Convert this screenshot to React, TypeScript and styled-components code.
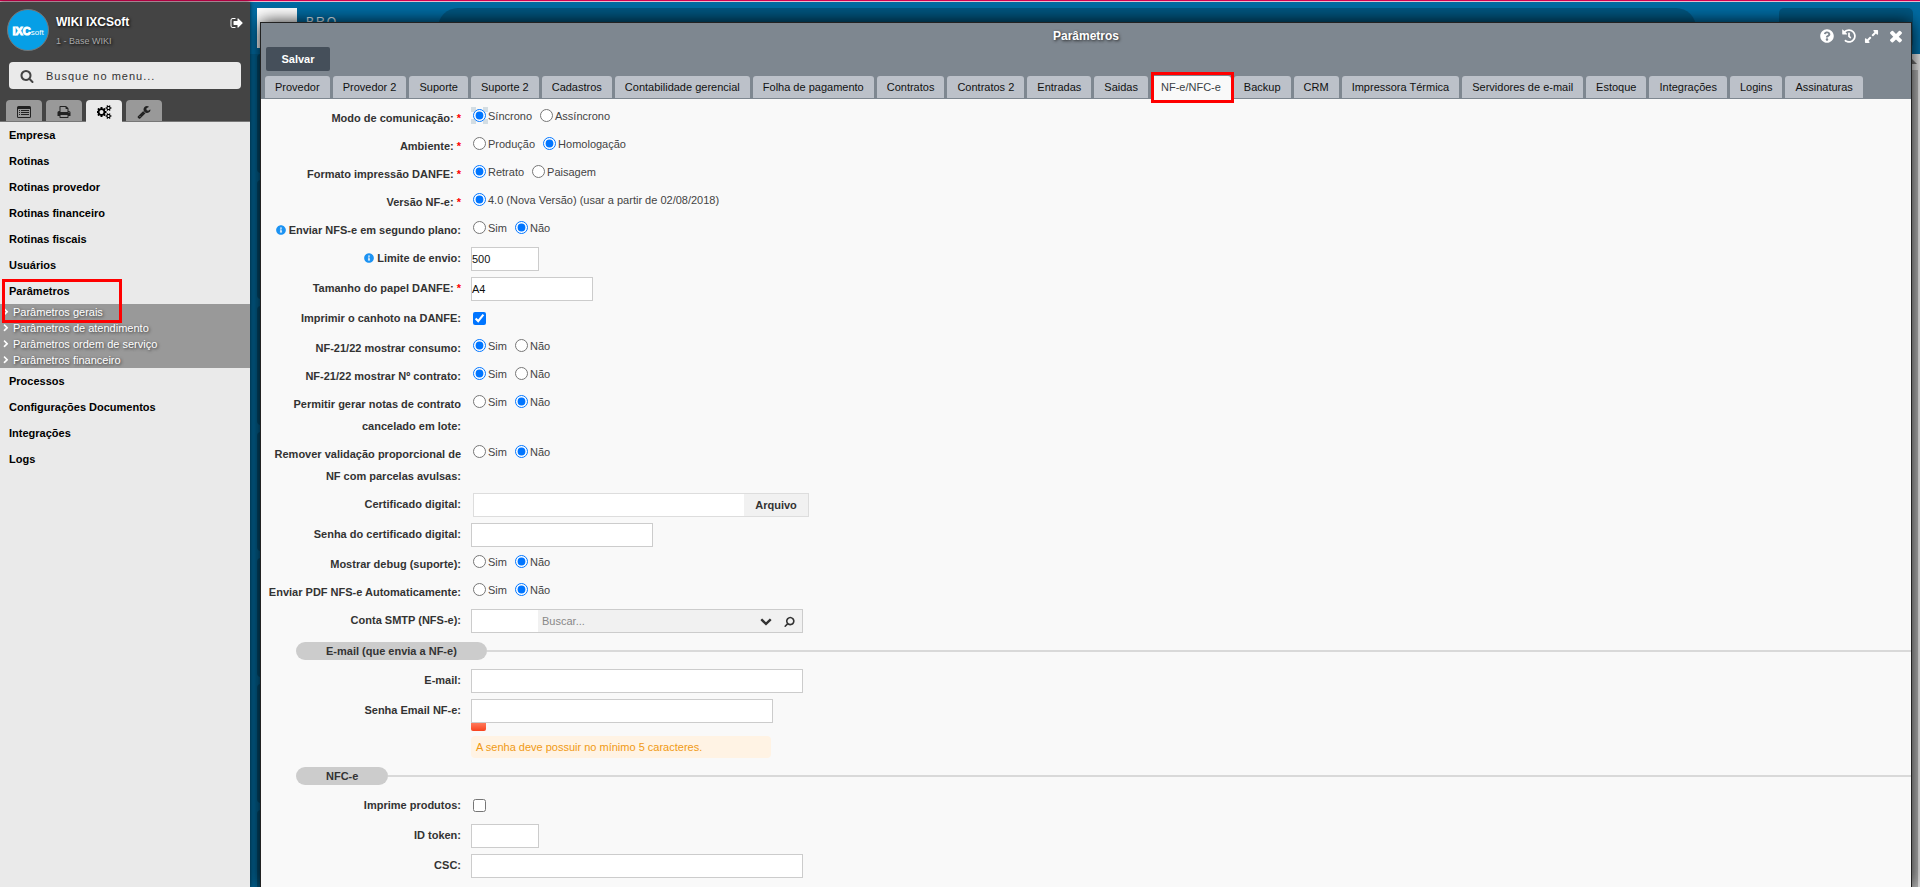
import React, { useId, useState } from 'react';
import styled, { createGlobalStyle } from 'styled-components';
import { FaExpandAlt, FaHistory, FaInfoCircle, FaQuestionCircle } from 'react-icons/fa';

const GlobalStyle = createGlobalStyle`
  *, *::before, *::after { box-sizing: border-box; }
  body {
    margin: 0;
    font-family: "Liberation Sans", Arial, sans-serif;
    font-size: 11px;
    color: #333;
  }
  button, input { font: inherit; color: inherit; }
  button { border: 0; padding: 0; background: none; cursor: pointer; }
`;

/* ---------- icons ---------- */

const paths = {
  times:
    'M1490 1322q0 40-28 68l-136 136q-28 28-68 28t-68-28l-294-294-294 294q-28 28-68 28t-68-28l-136-136q-28-28-28-68t28-68l294-294-294-294q-28-28-28-68t28-68l136-136q28-28 68-28t68 28l294 294 294-294q28-28 68-28t68 28l136 136q28 28 28 68t-28 68l-294 294 294 294q28 28 28 68z',
  chevronDown:
    'M1683 808l-742 741q-19 19-45 19t-45-19l-742-741q-19-19-19-45.500t19-45.500l166-165q19-19 45-19t45 19l531 531 531-531q19-19 45-19t45 19l166 165q19 19 19 45.500t-19 45.500z',
  chevronRight:
    'M1363 877l-742 742q-19 19-45 19t-45-19l-166-166q-19-19-19-45t19-45l531-531-531-531q-19-19-19-45t19-45l166-166q19-19 45-19t45 19l742 742q19 19 19 45t-19 45z',
  search:
    'M1216 832q0-185-131.5-316.5t-316.5-131.5-316.5 131.5-131.5 316.5 131.5 316.5 316.5 131.5 316.5-131.5 131.5-316.5zm512 832q0 52-38 90t-90 38q-54 0-90-38l-343-342q-179 124-399 124-143 0-273.5-55.5t-225-150-150-225-55.5-273.5 55.5-273.5 150-225 225-150 273.5-55.5 273.5 55.5 225 150 150 225 55.5 273.5q0 220-124 399l343 343q37 37 37 90z',
  signOut:
    'M704 1440q0 4 1 20t.5 26.5-3 23.5-10 19.5-20.5 6.5h-320q-119 0-203.5-84.5t-84.5-203.5v-704q0-119 84.5-203.5t203.5-84.5h320q13 0 22.5 9.5t9.5 22.5q0 4 1 20t.5 26.5-3 23.5-10 19.5-20.5 6.5h-320q-66 0-113 47t-47 113v704q0 66 47 113t113 47h312l11.5 1 11.5 3 8 5.5 7 9 2 13.5zm928-544q0 26-19 45l-544 544q-19 19-45 19t-45-19-19-45v-288h-448q-26 0-45-19t-19-45v-384q0-26 19-45t45-19h448v-288q0-26 19-45t45-19 45 19l544 544q19 19 19 45z',
  wrench:
    'M448 1472q0-26-19-45t-45-19-45 19-19 45 19 45 45 19 45-19 19-45zm644-420l-682 682q-37 37-90 37-52 0-91-37l-106-108q-38-36-38-90 0-53 38-91l681-681q39 98 114.5 173.5t173.5 114.5zm634-435q0 39-23 106-47 134-164.5 217.5t-258.5 83.5q-185 0-316.5-131.5t-131.5-316.5 131.5-316.5 316.5-131.5q58 0 121.5 16.5t107.5 46.5q16 11 16 28t-16 28l-293 169v224l193 107q5-3 79-48.5t135.5-81 70.5-35.5q15 0 23.5 10t8.5 25z',
  print:
    'M448 1536h896v-256h-896v256zm0-640h896v-384h-160q-40 0-68-28t-28-68v-160h-640v640zm1152 64q0-26-19-45t-45-19-45 19-19 45 19 45 45 19 45-19 19-45zm128 0v416q0 13-9.5 22.5t-22.5 9.5h-224v160q0 40-28 68t-68 28h-960q-40 0-68-28t-28-68v-160h-224q-13 0-22.5-9.5t-9.5-22.5v-416q0-79 56.5-135.5t135.5-56.5h64v-544q0-40 28-68t68-28h672q40 0 88 20t76 48l152 152q28 28 48 76t20 88v256h64q79 0 135.5 56.5t56.5 135.5z',
  cogs:
    'M832 896q0-106-75-181t-181-75-181 75-75 181 75 181 181 75 181-75 75-181zm768 512q0-52-38-90t-90-38-90 38-38 90q0 53 37.5 90.5t90.5 37.5 90.5-37.5 37.5-90.5zm0-1024q0-52-38-90t-90-38-90 38-38 90q0 53 37.5 90.5t90.5 37.5 90.5-37.5 37.5-90.5zm-384 421v185q0 10-7 19.5t-16 10.5l-155 24q-11 35-32 76 34 48 90 115 7 11 7 20 0 12-7 19-23 30-82.5 89.5t-78.5 59.5q-11 0-21-7l-115-90q-37 19-77 31-11 108-23 155-7 24-30 24h-186q-11 0-20-7.5t-10-17.5l-23-153q-34-10-75-31l-118 89q-7 7-20 7-11 0-21-8-144-133-144-160 0-9 7-19 10-14 41-53t47-61q-23-44-35-82l-152-24q-10-1-17-9.5t-7-19.5v-185q0-10 7-19.5t16-10.5l155-24q11-35 32-76-34-48-90-115-7-11-7-20 0-12 7-20 22-30 82-89t79-59q11 0 21 7l115 90q34-18 77-32 11-108 23-154 7-24 30-24h186q11 0 20 7.5t10 17.5l23 153q34 10 75 31l118-89q8-7 20-7 11 0 21 8 144 133 144 160 0 8-7 19-12 16-42 54t-45 60q23 48 34 82l152 23q10 2 17 10.5t7 19.5zm640 533v140q0 16-149 31-12 27-30 52 51 113 51 138 0 4-4 7-122 71-124 71-8 0-46-47t-52-68q-20 2-30 2t-30-2q-14 21-52 68t-46 47q-2 0-124-71-4-3-4-7 0-25 51-138-18-25-30-52-149-15-149-31v-140q0-16 149-31 13-29 30-52-51-113-51-138 0-4 4-7 4-2 35-20t59-34 30-16q8 0 46 46.5t52 67.5q20-2 30-2t30 2q51-71 92-112l6-2q4 0 124 70 4 3 4 7 0 25-51 138 17 23 30 52 149 15 149 31zm0-1024v140q0 16-149 31-12 27-30 52 51 113 51 138 0 4-4 7-122 71-124 71-8 0-46-47t-52-68q-20 2-30 2t-30-2q-14 21-52 68t-46 47q-2 0-124-71-4-3-4-7 0-25 51-138-18-25-30-52-149-15-149-31v-140q0-16 149-31 13-29 30-52-51-113-51-138 0-4 4-7 4-2 35-20t59-34 30-16q8 0 46 46.5t52 67.5q20-2 30-2t30 2q51-71 92-112l6-2q4 0 124 70 4 3 4 7 0 25-51 138 17 23 30 52 149 15 149 31z',
};

const Glyph = ({ name, size, mirrored }: { name: keyof typeof paths; size: number; mirrored?: boolean }) => {
  const width = name === 'cogs' ? 1920 : 1792;
  return (
    <svg height={size} width={Math.round((size * width) / 1792)} viewBox={`0 0 ${width} 1792`} fill="currentColor" aria-hidden="true">
      <path d={paths[name]} transform={mirrored ? 'matrix(-1 0 0 1 1792 0)' : undefined} />
    </svg>
  );
};

const ListIcon = () => (
  <svg width="14" height="12" viewBox="0 0 14 12" fill="currentColor" aria-hidden="true">
    <path d="M1.5 0h11A1.5 1.5 0 0 1 14 1.500v9A1.500 1.500 0 0 1 12.500 12h-11A1.500 1.500 0 0 1 0 10.500v-9A1.500 1.500 0 0 1 1.500 0zM1 3v7.500q0 .5.5.5h11q.5 0 .5-.5V3z" fillRule="evenodd" />
    <path d="M2 4h1v1H2zM4 4h8v1H4zM2 6h1v1H2zM4 6h8v1H4zM2 8h1v1H2zM4 8h8v1H4z" />
  </svg>
);

/* ---------- page frame ---------- */

const Page = styled.div`
  display: flex;
  flex-direction: column;
  min-height: 100vh;
`;

const LoadingBar = styled.div`
  height: 2px;
  background: linear-gradient(#d3004d 50%, #e6b8cb 50%);
`;

const Columns = styled.div`
  display: flex;
  flex: 1;
`;

/* ---------- side bar ---------- */

const SideBar = styled.aside`
  position: relative;
  z-index: 2;
  flex: 0 0 250px;
  background: #eaeaea;
  box-shadow: 0 0 4px rgba(0, 0, 0, 0.7);
`;

const SideTop = styled.div`
  padding: 7px 9px 0 7px;
  background: #444;
  border-bottom: 1px solid #777;
`;

const Account = styled.div`
  display: flex;
  gap: 7px;
  color: #fff;
`;

const Logo = styled.div`
  display: flex;
  align-items: baseline;
  justify-content: center;
  width: 42px;
  height: 42px;
  border: 1px solid #777;
  border-radius: 50%;
  background: #069fe6;
  line-height: 42px;
  font-size: 8px;
`;

const LogoStrong = styled.span`
  font-size: 11px;
  font-weight: bold;
  -webkit-text-stroke: 1px #fff;
`;

const AccountText = styled.div`
  flex: 1;
  padding-top: 5px;
  text-shadow: 1px 1px 3px #000;
`;

const AccountName = styled.div`
  font-size: 12px;
  font-weight: bold;
  line-height: 16px;
`;

const AccountBase = styled.div`
  margin-top: 4px;
  font-size: 9px;
  line-height: 14px;
  color: #aaa;
`;

const SignOut = styled.button`
  align-self: flex-start;
  display: flex;
  margin-top: 7px;
  margin-right: -3px;
  color: #fff;
`;

const MenuSearch = styled.label`
  display: flex;
  align-items: center;
  gap: 12px;
  height: 27px;
  margin: 11px 0 11px 2px;
  padding: 0 11px;
  border-radius: 4px;
  background: #eaeaea;
  color: #444;
  input {
    flex: 1;
    min-width: 0;
    padding: 0;
    border: 0;
    outline: 0;
    background: transparent;
    letter-spacing: 1px;
  }
  input::placeholder { color: #333; opacity: 1; }
`;

const SideTabs = styled.div`
  display: flex;
  gap: 4px;
  margin: 0 0 -1px -1px;
`;

const SideTab = styled.button<{ $active?: boolean }>`
  display: flex;
  align-items: center;
  justify-content: center;
  width: 36px;
  height: 22px;
  padding-top: 2px;
  border-radius: 4px 4px 0 0;
  background: ${(p) => (p.$active ? '#eaeaea' : '#999')};
  border-bottom: 1px solid ${(p) => (p.$active ? '#eaeaea' : '#777')};
  color: ${(p) => (p.$active ? '#000' : '#222')};
`;

const MenuLink = styled.a`
  display: block;
  padding-left: 9px;
  line-height: 26px;
  font-weight: bold;
  color: #000;
  text-decoration: none;
`;

const SubMenu = styled.div`
  background: #999;
`;

const SubLink = styled.a`
  display: flex;
  align-items: center;
  gap: 3px;
  padding-left: 2px;
  line-height: 16px;
  color: #fff;
  text-decoration: none;
  text-shadow: 1px 1px 3px #333;
`;

const MenuGroup = styled.div`
  position: relative;
`;

const Highlight = styled.span<{ $area: string }>`
  position: absolute;
  inset: ${(p) => p.$area};
  border: 3px solid #f00;
  pointer-events: none;
`;

/* ---------- desktop behind the window ---------- */

const Workspace = styled.main`
  position: relative;
  flex: 1;
  min-width: 0;
  overflow: hidden;
  background: #00608f;
`;

const Backdrop = styled.div`
  position: absolute;
  inset: 0;
  display: flex;
  flex-direction: column;
`;

const BackHeader = styled.div`
  display: flex;
  flex: 0 0 52px;
  padding: 6px 7px 6px 7px;
  background: #006ba2;
`;

const BackLogo = styled.div`
  flex: 0 0 40px;
  background: #fff;
`;

const BackTitle = styled.div`
  flex: 0 0 141px;
  padding: 6px 0 0 9px;
  font-size: 12px;
  line-height: 16px;
  letter-spacing: 2px;
  color: #e4f0f6;
`;

const BackSearch = styled.div`
  flex: 1;
  border-radius: 20px;
  background: #00557f;
`;

const BackUser = styled.div`
  flex: 0 0 134px;
  margin-left: 83px;
  border-radius: 5px;
  background: #00557f;
`;

const BackBody = styled.div`
  display: flex;
  flex: 1;
  justify-content: space-between;
`;

const BackCards = styled.div`
  display: flex;
  flex: 1;
  flex-direction: column;
  gap: 7px;
  padding-left: 7px;
`;

const BackCard = styled.div`
  height: 119px;
  border-radius: 4px;
  background: #004a6e;
`;

const BackScroll = styled.div`
  width: 17px;
  padding: 5px 2px 0;
  background: #e8e8e8;
`;

const ScrollArrow = styled.div`
  width: 0;
  height: 0;
  margin: 0 auto 6px;
  border: 5px solid transparent;
  border-top-width: 0;
  border-bottom-color: #777;
`;

const ScrollThumb = styled.div`
  height: 1000px;
  background: #b4b4b4;
`;

/* ---------- window ---------- */

const Window = styled.section`
  position: relative;
  display: flex;
  flex-direction: column;
  min-height: calc(100% - 20px);
  margin: 20px 8px 0 10px;
  border: 1px solid #222;
  border-bottom: 0;
  background: #f9f9f9;
  box-shadow: 0 0 16px rgba(0, 0, 0, 0.9);
`;

const WindowHead = styled.header`
  padding: 0 4px;
  background: #7e8790;
  border-bottom: 1px solid #7e8790;
`;

const TitleBar = styled.div`
  display: grid;
  grid-template-columns: 1fr auto 1fr;
  align-items: center;
  height: 24px;
  padding: 2px 2px 0;
`;

const Title = styled.h1`
  grid-column: 2;
  margin: 0;
  font-size: 12px;
  color: #fff;
  text-shadow: 1px 1px 3px #222;
`;

const WindowActions = styled.div`
  display: flex;
  align-items: center;
  justify-content: flex-end;
  gap: 8px;
  button { display: flex; color: #fff; }
`;

const SaveButton = styled.button`
  display: block;
  width: 64px;
  height: 24px;
  margin-left: 1px;
  border-radius: 2px;
  background: #454f5a;
  color: #fff;
  font-weight: bold;
`;

const Tabs = styled.nav`
  display: flex;
  gap: 3px;
  margin-top: 5px;
`;

const TabButton = styled.button<{ $active?: boolean }>`
  position: relative;
  height: ${(p) => (p.$active ? 23 : 22)}px;
  margin-bottom: ${(p) => (p.$active ? -1 : 0)}px;
  padding: ${(p) => (p.$active ? '0 10px 1px' : '0 10px')};
  border-radius: 3px 3px 0 0;
  background: ${(p) => (p.$active ? '#f9f9f9' : '#bcc1c9')};
  color: ${(p) => (p.$active ? '#3a3f45' : '#111')};
  white-space: nowrap;
`;

/* ---------- form ---------- */

const Form = styled.form`
  display: flex;
  flex-direction: column;
  gap: 6px;
  padding: 8px 0 6px 5px;
`;

const FieldRow = styled.div<{ $tall?: boolean }>`
  display: grid;
  grid-template-columns: 195px 1fr;
  column-gap: 10px;
  align-items: start;
  min-height: ${(p) => (p.$tall ? 24 : 22)}px;
`;

const FieldLabel = styled.label`
  text-align: right;
  font-weight: bold;
  line-height: 22px;
  svg { margin-right: 3px; color: #1c93f3; vertical-align: -1px; }
`;

const Required = styled.span`
  color: #f00;
`;

const Options = styled.div`
  display: flex;
  gap: 8px;
  padding-left: 2px;
`;

const Option = styled.label`
  display: flex;
  align-items: center;
  gap: 2px;
  height: 17px;
  color: #444;
  input { display: block; width: 13px; height: 13px; margin: 0; accent-color: #0075ff; }
`;

const FocusMark = styled.span<{ $on: boolean }>`
  margin: -2px;
  padding: 2px;
  --c: ${(p) => (p.$on ? 'linear-gradient(#d3dde3, #d3dde3)' : 'none')};
  background: var(--c) 0 0, var(--c) 100% 0, var(--c) 0 100%, var(--c) 100% 100%;
  background-size: 5px 5px;
  background-repeat: no-repeat;
`;

const Tick = styled.input`
  width: 13px;
  height: 13px;
  margin: 5px 2px 0;
`;

const TextBox = styled.input<{ $width: number }>`
  display: block;
  width: ${(p) => p.$width}px;
  max-width: 100%;
  height: 24px;
  padding: 0;
  border: 1px solid #ccc;
  background: #fff;
  color: #111;
`;

const FilePicker = styled.div`
  display: flex;
  width: 336px;
  height: 24px;
  margin-left: 2px;
  border: 1px solid #ddd;
  background: #f1f1f1;
  input { flex: 1; min-width: 0; padding: 0; border: 0; background: #fff; }
  button { width: 64px; font-weight: bold; }
`;

const Lookup = styled.div`
  display: flex;
  align-items: center;
  width: 332px;
  height: 24px;
  border: 1px solid #ccc;
  background: #f1f1f1;
  input { min-width: 0; height: 22px; padding: 0; border: 0; background: transparent; }
  input::placeholder { color: #888; opacity: 1; }
  button { display: flex; color: #333; }
`;

const LookupCode = styled.input`
  && { width: 66px; background: #fff; }
`;

const LookupText = styled.input`
  && { flex: 1; padding-left: 4px; }
`;

const LookupActions = styled.div`
  display: flex;
  align-items: center;
  gap: 12px;
  padding-right: 7px;
`;

const Strength = styled.div`
  width: 15px;
  height: 8px;
  border-radius: 0 0 2px 2px;
  background: linear-gradient(#ff7a5c, #f8431f);
`;

const Warning = styled.p`
  width: 300px;
  margin: 5px 0 0;
  padding-left: 5px;
  border-radius: 4px;
  background: #fff3e4;
  line-height: 22px;
  color: #f09a14;
`;

const SectionTitle = styled.div`
  display: flex;
  align-items: center;
  height: 24px;
  padding-left: 30px;
  &::after { content: ""; flex: 1; height: 2px; background: #d9d9d9; }
  h2 {
    margin: 0;
    padding: 0 30px;
    border-radius: 9px;
    background: #ccc;
    font-size: 11px;
    line-height: 18px;
  }
`;

/* ---------- pieces ---------- */

type LabelProps = { label: string; required?: boolean; info?: boolean };

const LabelText = ({ label, required, info }: LabelProps) => (
  <>
    {info && <FaInfoCircle size={10} />}
    {label}
    {required && <Required> *</Required>}
  </>
);

const RadioField = ({ options, value, ...label }: LabelProps & { options: string[]; value: string }) => {
  const id = useId();
  const [current, setCurrent] = useState(value);
  return (
    <FieldRow role="radiogroup" aria-labelledby={id}>
      <FieldLabel as="span" id={id}>
        <LabelText {...label} />
      </FieldLabel>
      <Options>
        {options.map((o) => (
          <Option key={o}>
            <FocusMark $on={o === 'Síncrono' && current === o}>
              <input type="radio" name={id} checked={current === o} onChange={() => setCurrent(o)} />
            </FocusMark>
            <span>{o}</span>
          </Option>
        ))}
      </Options>
    </FieldRow>
  );
};

const TextField = ({
  width,
  value,
  type = 'text',
  children,
  ...label
}: LabelProps & { width: number; value?: string; type?: string; children?: React.ReactNode }) => {
  const id = useId();
  return (
    <FieldRow $tall>
      <FieldLabel htmlFor={id}>
        <LabelText {...label} />
      </FieldLabel>
      <div>
        <TextBox id={id} type={type} $width={width} defaultValue={value} />
        {children}
      </div>
    </FieldRow>
  );
};

const CheckField = ({ checked, ...label }: LabelProps & { checked?: boolean }) => {
  const id = useId();
  return (
    <FieldRow $tall>
      <FieldLabel htmlFor={id}>
        <LabelText {...label} />
      </FieldLabel>
      <Tick id={id} type="checkbox" defaultChecked={checked} />
    </FieldRow>
  );
};

const yesNo = ['Sim', 'Não'];

const tabs = [
  'Provedor', 'Provedor 2', 'Suporte', 'Suporte 2', 'Cadastros', 'Contabilidade gerencial',
  'Folha de pagamento', 'Contratos', 'Contratos 2', 'Entradas', 'Saidas', 'NF-e/NFC-e', 'Backup',
  'CRM', 'Impressora Térmica', 'Servidores de e-mail', 'Estoque', 'Integrações', 'Logins', 'Assinaturas',
];

const menuBefore = ['Empresa', 'Rotinas', 'Rotinas provedor', 'Rotinas financeiro', 'Rotinas fiscais', 'Usuários'];
const menuAfter = ['Processos', 'Configurações Documentos', 'Integrações', 'Logs'];
const subMenu = ['Parâmetros gerais', 'Parâmetros de atendimento', 'Parâmetros ordem de serviço', 'Parâmetros financeiro'];

export default function App() {
  return (
    <Page>
      <GlobalStyle />
      <LoadingBar />
      <Columns>
        <SideBar>
          <SideTop>
            <Account>
              <Logo><LogoStrong>IXC</LogoStrong>soft</Logo>
              <AccountText>
                <AccountName>WIKI IXCSoft</AccountName>
                <AccountBase>1 - Base WIKI</AccountBase>
              </AccountText>
              <SignOut aria-label="Sair"><Glyph name="signOut" size={14} /></SignOut>
            </Account>
            <MenuSearch>
              <Glyph name="search" size={14} />
              <input type="text" placeholder="Busque no menu..." aria-label="Busque no menu" />
            </MenuSearch>
            <SideTabs>
              <SideTab aria-label="Menu"><ListIcon /></SideTab>
              <SideTab aria-label="Relatórios"><Glyph name="print" size={14} /></SideTab>
              <SideTab aria-label="Configurações" $active><Glyph name="cogs" size={14} /></SideTab>
              <SideTab aria-label="Ferramentas"><Glyph name="wrench" size={14} /></SideTab>
            </SideTabs>
          </SideTop>
          <nav>
            {menuBefore.map((m) => <MenuLink key={m} href="#">{m}</MenuLink>)}
            <MenuGroup>
              <MenuLink href="#">Parâmetros</MenuLink>
              <SubMenu>
                {subMenu.map((m) => (
                  <SubLink key={m} href="#"><Glyph name="chevronRight" size={8} />{m}</SubLink>
                ))}
              </SubMenu>
              <Highlight $area="1px 128px 45px 2px" />
            </MenuGroup>
            {menuAfter.map((m) => <MenuLink key={m} href="#">{m}</MenuLink>)}
          </nav>
        </SideBar>

        <Workspace>
          <Backdrop>
            <BackHeader>
              <BackLogo />
              <BackTitle>BRO —</BackTitle>
              <BackSearch />
              <BackUser />
            </BackHeader>
            <BackBody>
              <BackCards>
                {[0, 1, 2, 3, 4, 5, 6].map((n) => <BackCard key={n} />)}
              </BackCards>
              <BackScroll>
                <ScrollArrow />
                <ScrollThumb />
              </BackScroll>
            </BackBody>
          </Backdrop>

          <Window>
            <WindowHead>
              <TitleBar>
                <Title>Parâmetros</Title>
                <WindowActions>
                  <button aria-label="Ajuda"><FaQuestionCircle size={14} /></button>
                  <button aria-label="Histórico"><FaHistory size={14} /></button>
                  <button aria-label="Expandir"><FaExpandAlt size={15} /></button>
                  <button aria-label="Fechar"><Glyph name="times" size={18} /></button>
                </WindowActions>
              </TitleBar>
              <SaveButton>Salvar</SaveButton>
              <Tabs>
                {tabs.map((t) => (
                  <TabButton key={t} $active={t === 'NF-e/NFC-e'}>
                    {t}
                    {t === 'NF-e/NFC-e' && <Highlight $area="-4px -3px -4px 0" />}
                  </TabButton>
                ))}
              </Tabs>
            </WindowHead>

            <Form>
              <RadioField label="Modo de comunicação:" required options={['Síncrono', 'Assíncrono']} value="Síncrono" />
              <RadioField label="Ambiente:" required options={['Produção', 'Homologação']} value="Homologação" />
              <RadioField label="Formato impressão DANFE:" required options={['Retrato', 'Paisagem']} value="Retrato" />
              <RadioField
                label="Versão NF-e:"
                required
                options={['4.0 (Nova Versão) (usar a partir de 02/08/2018)']}
                value="4.0 (Nova Versão) (usar a partir de 02/08/2018)"
              />
              <RadioField label="Enviar NFS-e em segundo plano:" info options={yesNo} value="Não" />
              <TextField label="Limite de envio:" info width={68} value="500" />
              <TextField label="Tamanho do papel DANFE:" required width={122} value="A4" />
              <CheckField label="Imprimir o canhoto na DANFE:" checked />
              <RadioField label="NF-21/22 mostrar consumo:" options={yesNo} value="Sim" />
              <RadioField label="NF-21/22 mostrar Nº contrato:" options={yesNo} value="Sim" />
              <RadioField label="Permitir gerar notas de contrato cancelado em lote:" options={yesNo} value="Não" />
              <RadioField label="Remover validação proporcional de NF com parcelas avulsas:" options={yesNo} value="Não" />
              <FieldRow $tall>
                <FieldLabel htmlFor="certificado">Certificado digital:</FieldLabel>
                <FilePicker>
                  <input id="certificado" type="text" readOnly />
                  <button type="button">Arquivo</button>
                </FilePicker>
              </FieldRow>
              <TextField label="Senha do certificado digital:" width={182} type="password" />
              <RadioField label="Mostrar debug (suporte):" options={yesNo} value="Não" />
              <RadioField label="Enviar PDF NFS-e Automaticamente:" options={yesNo} value="Não" />
              <FieldRow $tall>
                <FieldLabel htmlFor="smtp">Conta SMTP (NFS-e):</FieldLabel>
                <Lookup>
                  <LookupCode id="smtp" type="text" />
                  <LookupText type="text" placeholder="Buscar..." aria-label="Buscar conta SMTP" />
                  <LookupActions>
                    <button type="button" aria-label="Abrir lista"><Glyph name="chevronDown" size={12} /></button>
                    <button type="button" aria-label="Pesquisar"><Glyph name="search" size={11} mirrored /></button>
                  </LookupActions>
                </Lookup>
              </FieldRow>

              <SectionTitle><h2>E-mail (que envia a NF-e)</h2></SectionTitle>
              <TextField label="E-mail:" width={332} />
              <TextField label="Senha Email NF-e:" width={302} type="password">
                <Strength />
                <Warning>A senha deve possuir no mínimo 5 caracteres.</Warning>
              </TextField>

              <SectionTitle><h2>NFC-e</h2></SectionTitle>
              <CheckField label="Imprime produtos:" />
              <TextField label="ID token:" width={68} />
              <TextField label="CSC:" width={332} />
            </Form>
          </Window>
        </Workspace>
      </Columns>
    </Page>
  );
}
